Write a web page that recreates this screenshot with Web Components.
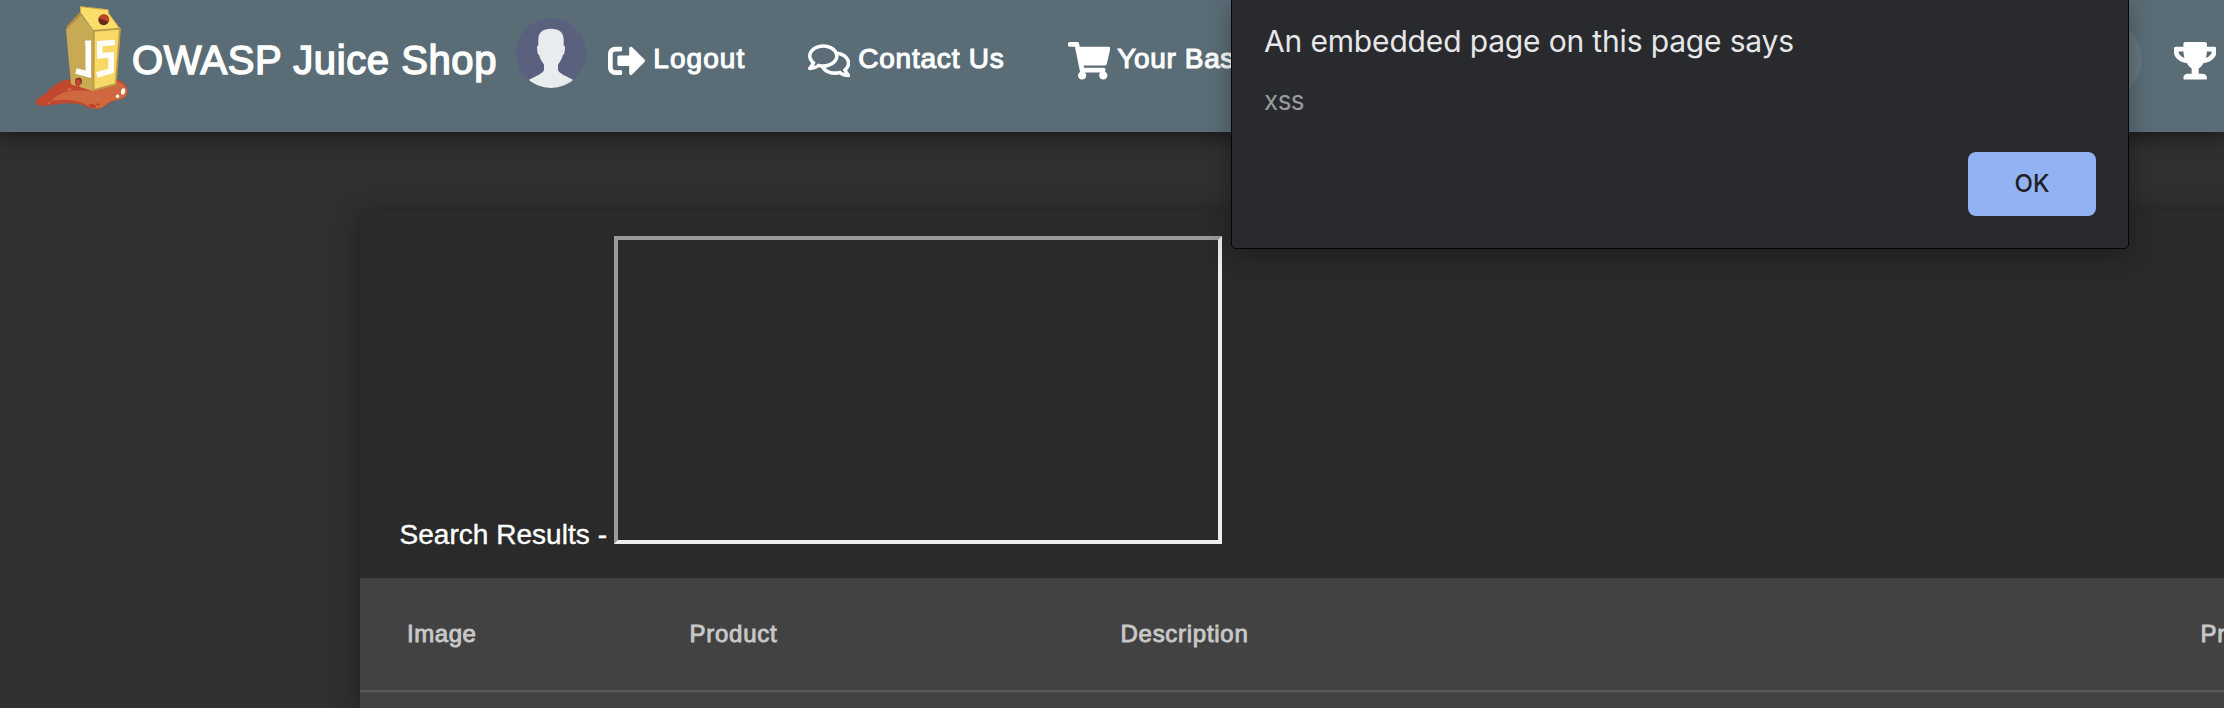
<!DOCTYPE html>
<html lang="en">
<head>
<meta charset="utf-8">
<title>OWASP Juice Shop</title>
<style>
html,body{margin:0;height:708px;overflow:hidden;background:#303030}
body{font-family:"Liberation Sans",Arial,sans-serif;color:#fff;position:relative}
</style>
</head>
<body>
<juice-app></juice-app>
<script>
const define = (name, html, setup) => customElements.define(name, class extends HTMLElement {
  connectedCallback() {
    if (this.shadowRoot) return;
    const t = document.createElement('template');
    t.innerHTML = html;
    this.attachShadow({mode: 'open'}).appendChild(t.content.cloneNode(true));
    if (setup) setup(this, this.shadowRoot);
  }
});

/* Text tracked so that its advance equals the width attribute. */
define('fit-text', `<style>
:host{display:block;white-space:nowrap}
span{display:inline-block}
</style><span><slot></slot></span>`, (el, root) => {
  const span = root.querySelector('span');
  const n = el.textContent.length;
  const target = parseFloat(el.getAttribute('width'));
  span.style.letterSpacing = (target - span.getBoundingClientRect().width) / n + 'px';
  el.style.width = target + 'px';
});

const ICONS = {
  logout: ['0 0 512 512', 'M497 273L329 441c-15 15-41 4.5-41-17v-96H152c-13.3 0-24-10.7-24-24v-96c0-13.3 10.7-24 24-24h136V88c0-21.4 25.9-32 41-17l168 168c9.3 9.4 9.3 24.6 0 34zM192 436v-40c0-6.6-5.4-12-12-12H96c-17.7 0-32-14.3-32-32V160c0-17.7 14.3-32 32-32h84c6.6 0 12-5.4 12-12V76c0-6.6-5.4-12-12-12H96c-53 0-96 43-96 96v192c0 53 43 96 96 96h84c6.6 0 12-5.4 12-12z'],
  comments: ['0 0 576 512', 'M532 386.2c27.5-27.1 44-61.1 44-98.2 0-80-76.5-146.1-176.2-157.9C368.3 72.5 294.3 32 208 32 93.1 32 0 103.6 0 192c0 37 16.5 71 44 98.2-15.3 30.7-37.3 54.5-37.7 54.9-6.3 6.7-8.1 16.5-4.4 25 3.6 8.5 12 14 21.2 14 53.5 0 96.7-20.2 125.2-38.8 9.2 2.1 18.7 3.7 28.4 4.9C208.1 407.6 281.8 448 368 448c20.8 0 40.8-2.4 59.8-6.8C456.3 459.7 499.4 480 553 480c9.2 0 17.5-5.5 21.2-14 3.6-8.5 1.9-18.3-4.4-25-.4-.3-22.5-24.1-37.8-54.8zm-392.8-92.3L122.1 305c-14.1 9.1-28.5 16.3-43.1 21.4 2.7-4.7 5.4-9.7 8-14.8l15.5-31.1L77.7 256C64.2 242.6 48 220.7 48 192c0-60.7 73.3-112 160-112s160 51.3 160 112-73.3 112-160 112c-16.5 0-33-1.9-49-5.6l-19.8-4.5zM498.3 352l-24.7 24.4 15.5 31.1c2.6 5.1 5.3 10.1 8 14.8-14.6-5.1-29-12.3-43.1-21.4l-17.1-11.1-19.9 4.6c-16 3.7-32.5 5.6-49 5.6-54 0-102.2-20.1-131.3-49.7C338 339.5 416 272.9 416 192c0-3.4-.4-6.7-.7-10C479.7 196.5 528 238.8 528 288c0 28.7-16.2 50.6-29.7 64z'],
  cart: ['0 0 576 512', 'M528.12 301.319l47.273-208C578.806 78.301 567.391 64 551.99 64H159.208l-9.166-44.81C147.758 8.021 137.93 0 126.529 0H24C10.745 0 0 10.745 0 24v16c0 13.255 10.745 24 24 24h69.883l70.248 343.435C147.325 417.1 136 435.222 136 456c0 30.928 25.072 56 56 56s56-25.072 56-56c0-15.674-6.447-29.835-16.824-40h209.647C430.447 426.165 424 440.326 424 456c0 30.928 25.072 56 56 56s56-25.072 56-56c0-22.172-12.888-41.332-31.579-50.405l5.517-24.276c3.413-15.018-8.002-29.319-23.403-29.319H218.117l-6.545-32h293.145c11.206 0 20.92-7.754 23.403-18.681z'],
  trophy: ['0 0 576 512', 'M552 64H448V24c0-13.3-10.7-24-24-24H152c-13.3 0-24 10.7-24 24v40H24C10.7 64 0 74.7 0 88v56c0 35.7 22.5 72.4 61.9 100.7 31.5 22.7 69.8 37.1 110 41.7C203.3 338.5 240 360 240 360v72h-48c-35.3 0-64 20.7-64 56v12c0 6.6 5.4 12 12 12h296c6.6 0 12-5.4 12-12v-12c0-35.3-28.7-56-64-56h-48v-72s36.7-21.5 68.1-73.6c40.3-4.6 78.6-19 110-41.7 39.3-28.3 61.9-65 61.9-100.7V88c0-13.3-10.7-24-24-24zM99.3 192.8C74.9 175.2 64 155.6 64 144v-16h64.2c1 32.6 5.8 61.2 12.8 86.2-15.1-5.2-29.2-12.4-41.7-21.4zM512 144c0 16.1-17.7 36.1-35.3 48.8-12.5 9-26.7 16.2-41.8 21.4 7-25 11.8-53.6 12.8-86.2H512v16z']
};
define('nav-icon', `<style>:host{display:block;flex:none}svg{display:block;fill:#fff}</style>
<svg xmlns="http://www.w3.org/2000/svg"><path/></svg>`, (el, root) => {
  const [box, d] = ICONS[el.getAttribute('name')];
  const svg = root.querySelector('svg');
  svg.setAttribute('viewBox', box);
  svg.setAttribute('width', box.split(' ')[2] * 0.0735);
  svg.setAttribute('height', 37.6);
  root.querySelector('path').setAttribute('d', d);
});

define('juice-logo', `<style>:host{display:block;flex:none}svg{display:block}</style>
<svg width="94" height="106" viewBox="35 4 94 106">
<path fill="#c1472f" d="M36 102c0-3 5-5 9-8 6-5 11-13 24-14.500l14-.5 36 1c6 3 9 7 8.500 12-.5 6-7 8-14 9-6 1-8 8-17 8-8 0-11-4-18-5-12-2-24 1-34 1.800-5 .3-8.500-.8-8.500-3.800z"/>
<path fill="#cf673f" d="M51 101c5-6 13-10 24-10.500 10-.5 16 1 25-1l16-8.500c7 2 11.500 6 11.300 11-.3 6-7.300 7.500-14.300 8.500-6 1-8 8-17 8-6 0-9-4-15-6-12-4-19-3-30-1.500z"/>
<ellipse cx="69.500" cy="89.300" rx="2.500" ry="1.300" fill="#cf673f"/><ellipse cx="49" cy="102.800" rx="1.800" ry="1" fill="#cf673f"/>
<ellipse cx="92.500" cy="105.800" rx="3.700" ry="1.700" transform="rotate(12 92.500 105.800)" fill="#b9432d"/><ellipse cx="98" cy="104.300" rx="2" ry=".9" fill="#b9432d"/>
<path fill="#c8aa55" d="M66 29.500L80.300 13.500 94 31l-.5 60L71 84.500z"/>
<path fill="#b58e3d" d="M80 6.500l1.500.5-.5 8L66 30l1-4L80 12z"/>
<path fill="#fade69" d="M80.500 6.500l27.500 3 .8 4 11.500 15.500-26.300 2L80.800 13z"/>
<path fill="#f8d967" d="M94 31l26.400-2L116 84.500 93.500 90.500z"/>
<path fill="none" stroke="#b99a47" stroke-width="1.800" d="M120 28.700l-26.200 2.100L93.500 90l22.200-5.800z"/>
<path fill="none" stroke="#c6a44a" stroke-width="1" d="M80.500 6.700l27.500 3 .8 4 11.300 15.300"/>
<circle cx="103.700" cy="19.800" r="5.400" fill="#69291b"/><path fill="#bd442c" d="M98.800 18c1-3 4-4.500 6.800-3.400 3.300 1.300 4.400 4.300 3 7.400z"/>
<path fill="none" stroke="#fff" stroke-width="5.600" d="M85.200 43.200h3M88.300 40.500V74.300L76 71"/>
<path fill="none" stroke="#fff" stroke-width="5.500" d="M115 42.600l-15.200 1V55.700l11.300-.7v15.800L97 75"/>
<path fill="#c1472f" d="M72 90c4-1 4.500-4 3-7l4-4 2.600 3c-2 2-3 4-1 7z"/>
<circle cx="78.500" cy="81.300" r="3.500" fill="#7c321f"/><circle cx="78" cy="82" r="2.700" fill="#c1472f"/>
<path fill="#fff" d="M122.500 88.500c2.500-.8 3 1 2.500 3.500-.5 2-2.300 3.500-3.600 2.300-1-1.300-.6-4.800 1.100-5.800z"/><circle cx="117.500" cy="96.200" r="1.700" fill="#fff"/>
</svg>`);

define('user-avatar', `<style>:host{display:block;flex:none}svg{display:block}</style>
<svg width="70" height="70" viewBox="0 0 70 70"><defs><clipPath id="c"><circle cx="35" cy="35" r="35"/></clipPath></defs>
<g clip-path="url(#c)"><path fill="#5a617f" d="M0 0h70v70H0z"/>
<path fill="#e8ecee" d="M35 10.700c8 0 12.700 3.300 12.700 11.300v5.500c1.500.5 1.500 2 1 5-.3 2.500-.4 4-1.800 4.500-.9 3.600-2.600 6.500-4.900 9.500v5c0 4 9 6.500 17 11.500v10H11V63c8-5 17-7.500 17-11.500v-5c-2.300-3-4-5.900-4.900-9.500-1.400-.5-1.500-2-1.800-4.500-.5-3-.5-4.500 1-5V22c0-8 4.700-11.300 12.700-11.300z"/></g></svg>`);

define('nav-link', `<style>
:host{display:flex;align-items:flex-start;flex:none;height:40px;font-size:28px;line-height:40px;-webkit-text-stroke:1.1px #fff}
</style><slot></slot>`);

define('top-bar', `<style>
:host{display:flex;align-items:flex-start;height:132px;box-sizing:border-box;padding-left:35px;padding-right:8px;background:#5a6d77;box-shadow:0 6px 12px rgba(0,0,0,.22),0 2px 24px rgba(0,0,0,.3);position:relative}
juice-logo{margin-top:4px}
.title{margin:40px 0 0 3px;font-size:40px;line-height:40px;-webkit-text-stroke:1.500px #fff;flex:none}
user-avatar{margin:18px 0 0 19px}
nav-link{margin-top:38.500px}
.out{margin-left:21.500px}.out nav-icon{margin:3.500px 8.200px 0 0}
.contact{margin-left:62.500px}.contact nav-icon{margin:3.500px 8px 0 0}
.basket{margin-left:63.300px}.basket nav-icon{margin:3.500px 7px 0 0}
.spot{width:80px;height:80px;border-radius:50%;background:rgba(255,255,255,.08);margin:18.500px 32px 0 auto;flex:none}
.cup{margin-top:42px}
</style>
<juice-logo></juice-logo>
<fit-text class="title" width="365">OWASP Juice Shop</fit-text>
<user-avatar></user-avatar>
<nav-link class="out"><nav-icon name="logout"></nav-icon><fit-text width="92">Logout</fit-text></nav-link>
<nav-link class="contact"><nav-icon name="comments"></nav-icon><fit-text width="146.500">Contact Us</fit-text></nav-link>
<nav-link class="basket"><nav-icon name="cart"></nav-icon><fit-text width="157">Your Basket</fit-text></nav-link>
<div class="spot"></div>
<nav-icon class="cup" name="trophy"></nav-icon>`);

define('search-results', `<style>
:host{display:block;margin:80px 0 0 360px;width:2000px;height:496px;background:#2a2a2a;box-shadow:0 4px 26px rgba(0,0,0,.42)}
.head{display:flex;align-items:flex-end;box-sizing:border-box;height:366px;padding:24px 0 34px 40px}
.label{font-size:28px;line-height:32px;-webkit-text-stroke:.4px #fff;margin:0 7px -6.500px -.5px;flex:none}
.frame{width:600px;height:300px;border:4px solid;border-color:#9a9a9a #eee #eee #9a9a9a;flex:none}
.row{display:grid;grid-template-columns:282.500px 431px 1080px 200px;box-sizing:border-box;height:114px;padding:39px 0 0 47px;background:#424242;border-bottom:2px solid #595959;font-size:24px;line-height:34px;color:#c8c8c8;-webkit-text-stroke:.9px #c8c8c8}
.body{height:16px;background:#424242;border-top:2px solid #484848}
</style>
<div class="head"><fit-text class="label" width="207.500">Search Results -</fit-text><div class="frame"></div></div>
<div class="row"><fit-text width="69.500">Image</fit-text><fit-text width="88">Product</fit-text><fit-text width="128">Description</fit-text><fit-text width="58">Price</fit-text></div>
<div class="body"></div>`);

define('alert-dialog', `<style>
:host{display:block;position:absolute;left:1231px;top:-2px;width:898px;height:251px;box-sizing:border-box;border:1px solid #050505;border-radius:0 0 5px 5px;background:#292a2d;box-shadow:0 6px 26px rgba(0,0,0,.32);font-family:Inter,Roboto,sans-serif;padding:22px 32px 0 32px}
.title{font-size:30px;line-height:40px;color:#e6e7e8}
.msg{font-size:26px;line-height:32px;color:#989b9f;margin-top:23.500px}
button{display:flex;justify-content:center;align-items:center;width:128px;height:64px;margin:35.500px 0 0 auto;padding:0;border:0;border-radius:8px;background:#92b3f3;color:#202124;font:500 24px/28px Inter,Roboto,sans-serif}
</style>
<fit-text class="title" width="530">An embedded page on this page says</fit-text>
<fit-text class="msg" width="40">xss</fit-text>
<button><fit-text width="35">OK</fit-text></button>`);

define('juice-app', `<style>:host{display:block;position:relative;width:2224px;height:708px;overflow:hidden}</style>
<top-bar></top-bar><search-results></search-results><alert-dialog></alert-dialog>`);
</script>
</body>
</html>
